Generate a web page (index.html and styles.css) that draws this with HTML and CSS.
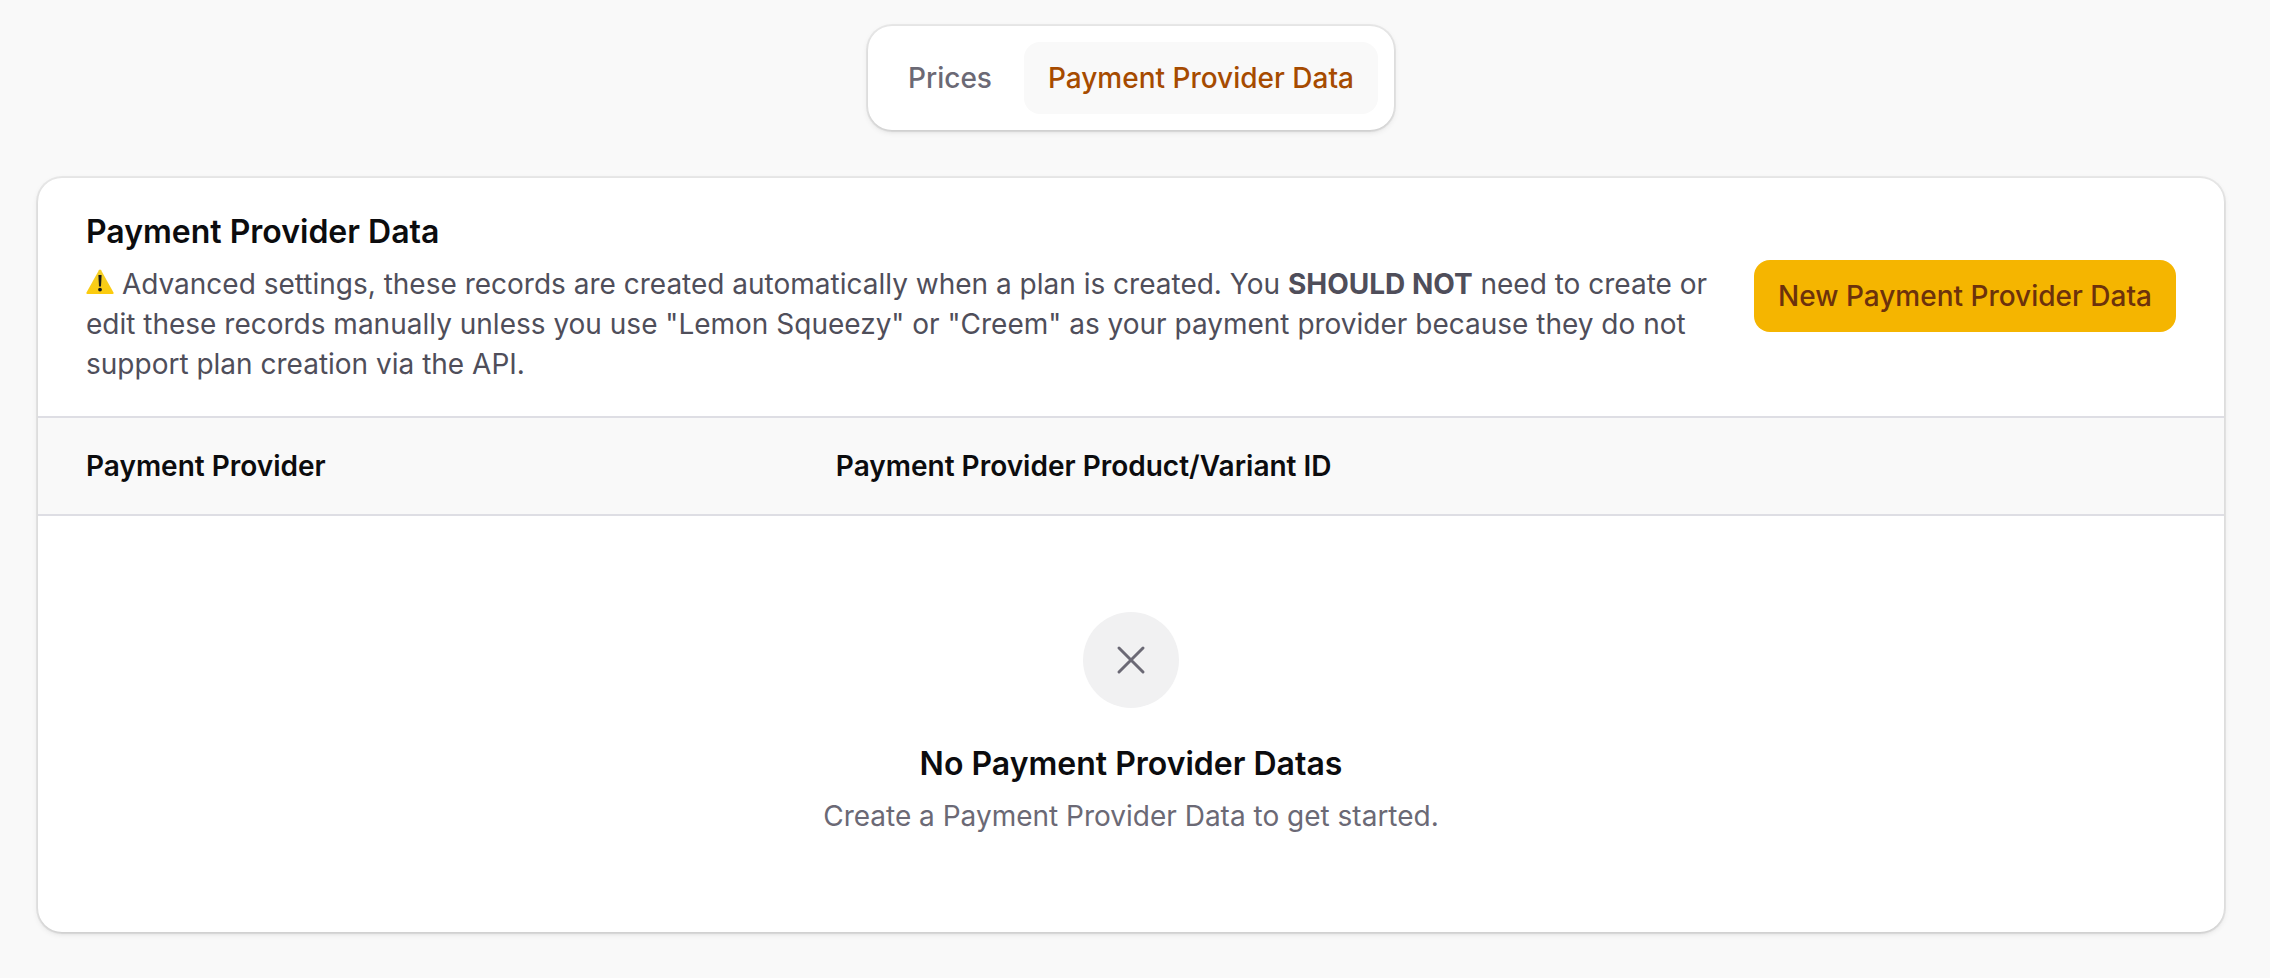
FILE: index.html
```
<!DOCTYPE html>
<html lang="en">

<head>
  <meta charset="UTF-8">
  <meta name="viewport" content="width=device-width, initial-scale=1.0">
  <title>Payment Provider Data</title>
  <link rel="stylesheet" href="styles.css">
</head>

<body>
  <nav class="tabs">
    <button type="button" class="tab">Prices</button>
    <button type="button" class="tab tab--active">Payment Provider Data</button>
  </nav>

  <section class="card">
    <header class="card__header">
      <div class="card__intro">
        <h2 class="heading">Payment Provider Data</h2>
        <p class="description">
          <svg class="warning" viewBox="0 0 28 26" aria-hidden="true">
            <defs>
              <linearGradient id="warning-fill" x1="0" y1="0" x2="0" y2="1">
                <stop offset="0" stop-color="#f3cf2a" />
                <stop offset="1" stop-color="#fccb0c" />
              </linearGradient>
            </defs>
            <path d="M12.9 1.2Q14 -.4 15.1 1.2L27.5 23.6Q28 25 26.6 25H1.4Q0 25 .5 23.6Z" fill="url(#warning-fill)" />
            <path d="M12.4 6.6Q12.4 6 13 6H15Q15.6 6 15.6 6.6L15 17.4H13Z" fill="#1a1a1a" />
            <circle cx="14" cy="20.6" r="1.9" fill="#1a1a1a" />
          </svg>
          Advanced settings, these records are created automatically when a plan is created. You <b>SHOULD NOT</b> need to create or edit these records manually unless you use "Lemon Squeezy" or "Creem" as your payment provider because they do not support plan creation via the API.
        </p>
      </div>
      <button type="button" class="btn">New Payment Provider Data</button>
    </header>

    <table class="table">
      <thead>
        <tr>
          <th class="col-provider">Payment Provider</th>
          <th>Payment Provider Product/Variant ID</th>
        </tr>
      </thead>
    </table>

    <div class="empty">
      <div class="empty__icon">
        <svg viewBox="0 0 24 24" fill="none" stroke="currentColor" stroke-width="1.5" stroke-linecap="round" stroke-linejoin="round" aria-hidden="true">
          <path d="M6 18 18 6M6 6l12 12" />
        </svg>
      </div>
      <h3 class="heading">No Payment Provider Datas</h3>
      <p class="empty__text">Create a Payment Provider Data to get started.</p>
    </div>
  </section>
</body>

</html>
```
FILE: styles.css
```
:root {
  --bg: #f9f9f9;
  --border: #dedee4;
  --heading: #0c0c0e;
  --text: #4f4e5a;
  --muted: #6b6975;
  --ring: 0 0 0 2px rgba(0, 0, 0, 0.06), 0 2px 6px rgba(0, 0, 0, 0.1), 0 2px 4px -2px rgba(0, 0, 0, 0.1);
}

* {
  box-sizing: border-box;
}

body {
  margin: 0;
  padding: 26px 46px 46px 38px;
  background-color: var(--bg);
  color: var(--text);
  font-family: Inter, "Liberation Sans", sans-serif;
  font-size: 28px;
  line-height: 40px;
}

h2,
h3,
p {
  margin: 0;
}

button {
  border: 0;
  border-radius: 16px;
  padding: 16px 24px;
  font: inherit;
  font-weight: 500;
  white-space: nowrap;
  cursor: pointer;
}

.tabs {
  display: flex;
  gap: 8px;
  width: fit-content;
  margin: 0 auto 48px;
  padding: 16px;
  border-radius: 24px;
  background-color: white;
  box-shadow: var(--ring);
}

.tab {
  background-color: transparent;
  color: var(--muted);
}

.tab--active {
  background-color: var(--bg);
  color: #a64b00;
}

.card {
  border-radius: 24px;
  background-color: white;
  box-shadow: var(--ring);
}

.card__header {
  display: flex;
  align-items: center;
  gap: 24px;
  padding: 30px 48px 32px;
}

.card__intro {
  flex: 1;
}

.heading {
  color: var(--heading);
  font-size: 32px;
  font-weight: 600;
  line-height: 48px;
}

.description {
  margin-top: 8px;
}

.description b {
  font-weight: 700;
}

.warning {
  width: 28px;
  height: 26px;
  vertical-align: -1px;
}

.btn {
  background-color: #f5b500;
  color: #6c320c;
}

.table {
  width: 100%;
  border-collapse: separate;
  border-spacing: 0;
}

.table th {
  padding: 28px 24px;
  border: solid var(--border);
  border-width: 2px 0;
  background-color: var(--bg);
  color: var(--heading);
  font-weight: 600;
  text-align: left;
}

.table .col-provider {
  width: 35.4%;
  padding-left: 48px;
}

.empty {
  display: flex;
  flex-direction: column;
  align-items: center;
  padding: 96px 48px;
  text-align: center;
}

.empty__icon {
  display: grid;
  place-items: center;
  width: 96px;
  height: 96px;
  margin-bottom: 32px;
  border-radius: 50%;
  background-color: #f1f1f2;
  color: var(--muted);
}

.empty__icon svg {
  width: 48px;
  height: 48px;
}

.empty__text {
  margin-top: 8px;
  color: var(--muted);
}
```
